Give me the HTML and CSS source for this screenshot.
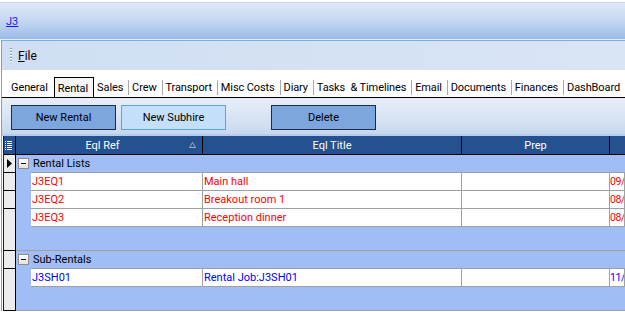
FILE: index.html
```html
<!DOCTYPE html>
<html lang="en">
<head>
  <meta charset="UTF-8">
  <title>J3 - Rental</title>
  <link rel="stylesheet" href="styles.css">
</head>
<body>
  <div class="titlebar"><a class="job-link" href="#">J3</a></div>
  <div class="panel">
    <div class="menubar">
      <span class="grip"></span>
      <span class="menu-item"><u>F</u>ile</span>
    </div>
    <div class="tabs">
      <span class="tab">General</span>
      <span class="tab active">Rental</span>
      <span class="tab">Sales</span><span class="sep"></span>
      <span class="tab">Crew</span><span class="sep"></span>
      <span class="tab">Transport</span><span class="sep"></span>
      <span class="tab">Misc Costs</span><span class="sep"></span>
      <span class="tab">Diary</span><span class="sep"></span>
      <span class="tab">Tasks&nbsp; &amp; Timelines</span><span class="sep"></span>
      <span class="tab">Email</span><span class="sep"></span>
      <span class="tab">Documents</span><span class="sep"></span>
      <span class="tab">Finances</span><span class="sep"></span>
      <span class="tab">DashBoard</span>
    </div>
    <div class="toolbar">
      <button class="btn">New Rental</button>
      <button class="btn light">New Subhire</button>
      <button class="btn delete">Delete</button>
    </div>
    <div class="grid">
      <div class="row head">
        <div class="ind">
          <svg width="7" height="9" viewBox="0 0 7 9">
            <g fill="#fff">
              <rect x="0" y="0" width="1" height="1"/><rect x="2" y="0" width="5" height="1"/>
              <rect x="0" y="2" width="1" height="1"/><rect x="2" y="2" width="5" height="1"/>
              <rect x="0" y="4" width="1" height="1"/><rect x="2" y="4" width="5" height="1"/>
              <rect x="0" y="6" width="1" height="1"/><rect x="2" y="6" width="5" height="1"/>
              <rect x="0" y="8" width="1" height="1"/><rect x="2" y="8" width="5" height="1"/>
            </g>
          </svg>
        </div>
        <div class="hcell c-ref">
          <span class="hlabel">Eql Ref</span>
          <svg class="sort" width="7" height="6" viewBox="0 0 7 6"><polygon points="3.5,0.5 6.5,5.5 0.5,5.5" fill="none" stroke="#a3acbd"/></svg>
        </div>
        <div class="hcell c-title">Eql Title</div>
        <div class="hcell c-prep">Prep</div>
        <div class="hcell c-date"></div>
      </div>

      <div class="row group">
        <div class="ind current">
          <svg width="5" height="9" viewBox="0 0 5 9"><polygon points="0,0 5,4.5 0,9" fill="#000"/></svg>
        </div>
        <div class="group-body"><span class="toggle"></span>Rental Lists</div>
      </div>
      <div class="row data red">
        <div class="ind"></div><div class="indent"></div>
        <div class="cell c-code">J3EQ1</div>
        <div class="cell c-title">Main hall</div>
        <div class="cell c-prep"></div>
        <div class="cell c-date">09/</div>
      </div>
      <div class="row data red">
        <div class="ind"></div><div class="indent"></div>
        <div class="cell c-code">J3EQ2</div>
        <div class="cell c-title">Breakout room 1</div>
        <div class="cell c-prep"></div>
        <div class="cell c-date">08/</div>
      </div>
      <div class="row data red">
        <div class="ind"></div><div class="indent"></div>
        <div class="cell c-code">J3EQ3</div>
        <div class="cell c-title">Reception dinner</div>
        <div class="cell c-prep"></div>
        <div class="cell c-date">08/</div>
      </div>
      <div class="row foot">
        <div class="ind"></div>
        <div class="foot-body"><div class="indent"></div><div class="foot-fill"></div></div>
      </div>

      <div class="row group">
        <div class="ind"></div>
        <div class="group-body"><span class="toggle"></span>Sub-Rentals</div>
      </div>
      <div class="row data blue">
        <div class="ind"></div><div class="indent"></div>
        <div class="cell c-code">J3SH01</div>
        <div class="cell c-title">Rental Job:J3SH01</div>
        <div class="cell c-prep"></div>
        <div class="cell c-date">11/</div>
      </div>
      <div class="row foot">
        <div class="ind"></div>
        <div class="foot-body"><div class="indent"></div><div class="foot-fill"></div></div>
      </div>
    </div>
  </div>
</body>
</html>
```

FILE: styles.css
```css
body {
  margin: 0;
  width: 625px;
  height: 312px;
  overflow: hidden;
  background: #fff;
  font-family: Roboto, "Liberation Sans", Arial, sans-serif;
  font-size: 11px;
  color: #000;
}

.titlebar {
  height: 36px;
  margin-top: 2px;
  border-top: 1px solid #c6d6ec;
  border-bottom: 1px solid #e4edf9;
  background: linear-gradient(#dde9f8, #c7d9f2 45%, #9cbbe7);
  display: flex;
  align-items: center;
  padding-left: 6px;
}

.job-link {
  color: #1a1aee;
  text-decoration: underline;
}

.panel {
  margin-left: 1px;
  border-left: 1px solid #6fa3e6;
  border-top: 1px solid #7eaae6;
}

.menubar {
  height: 29px;
  display: flex;
  align-items: center;
  padding-left: 8px;
  background: linear-gradient(to right, #cfdef2, #d9e5f5);
}

.grip {
  width: 2px;
  height: 15px;
  margin-right: 6px;
  background: repeating-linear-gradient(to bottom, #8396b6 0 1px, #ffffff 1px 2px, transparent 2px 3px);
}

.menu-item {
  font-size: 12px;
}

.tabs {
  height: 27px;
  display: flex;
  align-items: flex-end;
  padding-left: 5px;
  border-bottom: 1px solid #000;
  white-space: nowrap;
  letter-spacing: -0.1px;
}

.tab {
  height: 20px;
  line-height: 21px;
  padding: 0 5px 0 3px;
}

.tab:first-child {
  padding: 0 4px;
}

.tab.active {
  box-sizing: border-box;
  margin-left: 2px;
  padding: 0 5px 0 3px;
  border: 1px solid #000;
  border-bottom: none;
  background: #f6f6f6;
}

.sep {
  width: 1px;
  height: 15px;
  margin-bottom: 2px;
  background: #a9a9a9;
}

.toolbar {
  height: 29px;
  display: flex;
  align-items: flex-start;
  padding: 7px 0 0 9px;
  border-bottom: 2px solid #b6ccec;
  background: linear-gradient(#e7eef9, #d3e0f2 70%, #c6d7ef);
}

.btn {
  width: 105px;
  height: 25px;
  flex: none;
  box-sizing: border-box;
  padding: 0;
  border: 1px solid #1c2c46;
  background: #7ea6de;
  font: inherit;
  color: #000;
}

.btn + .btn {
  margin-left: 5px;
}

.btn.light {
  background: #c4dffa;
  border-color: #55a4ee;
}

.btn.delete {
  margin-left: 45px;
}

.grid {
  margin-left: 1px;
  border-left: 1px solid #1e1e1e;
}

.row {
  display: flex;
}

.ind {
  width: 12px;
  flex: none;
  box-sizing: border-box;
  border-right: 1px solid #000;
  background: #ececec;
}

.head {
  height: 19px;
  box-sizing: border-box;
  border-bottom: 1px solid #000;
  background: #24518f;
  color: #fff;
}

.head .ind {
  background: transparent;
  display: flex;
  align-items: center;
  padding-left: 1px;
}

.hcell {
  box-sizing: border-box;
  border-right: 1px solid #000;
  display: flex;
  align-items: center;
  justify-content: center;
}

.hlabel {
  flex: 1;
  text-align: center;
}

.sort {
  margin-right: 6px;
}

.c-ref { width: 187px; }
.c-title { width: 259px; flex: none; }
.c-prep { width: 148px; flex: none; }
.c-code { width: 172px; flex: none; padding-left: 2px; }
.c-date { flex: 1; border-right: none; }

.cell.c-date {
  padding-left: 0;
  font-size: 10.5px;
  letter-spacing: -0.4px;
}

.group {
  height: 17px;
}

.group-body {
  flex: 1;
  display: flex;
  align-items: center;
  padding-left: 2px;
  background: #a0bdf5;
}

.current {
  display: flex;
  align-items: center;
  padding-left: 3px;
}

.toggle {
  width: 11px;
  height: 11px;
  box-sizing: border-box;
  margin-right: 4px;
  border: 1px solid #8d8d8d;
  background: linear-gradient(#ffffff, #e2e2e2);
  display: flex;
  align-items: center;
  justify-content: center;
}

.toggle::after {
  content: "";
  width: 5px;
  height: 1px;
  background: #000;
}

.data {
  height: 18px;
}

.data .ind {
  border-top: 1px solid #000;
}

.indent {
  width: 15px;
  flex: none;
  background: #a0bdf5;
}

.cell {
  box-sizing: border-box;
  border-top: 1px solid #a0a0a0;
  border-right: 1px solid #a0a0a0;
  background: #fff;
  line-height: 17px;
  padding-left: 1px;
  white-space: nowrap;
  overflow: hidden;
}

.red .cell { color: #ff0000; }
.blue .cell { color: #0000ff; }

.foot {
  height: 25px;
}

.foot .ind {
  border-bottom: 1px solid #000;
}

.foot-body {
  flex: 1;
  display: flex;
  box-sizing: border-box;
  border-bottom: 1px solid #a0a0a0;
  background: #a0bdf5;
}

.foot-fill {
  flex: 1;
  border-top: 1px solid #a0a0a0;
}
```
